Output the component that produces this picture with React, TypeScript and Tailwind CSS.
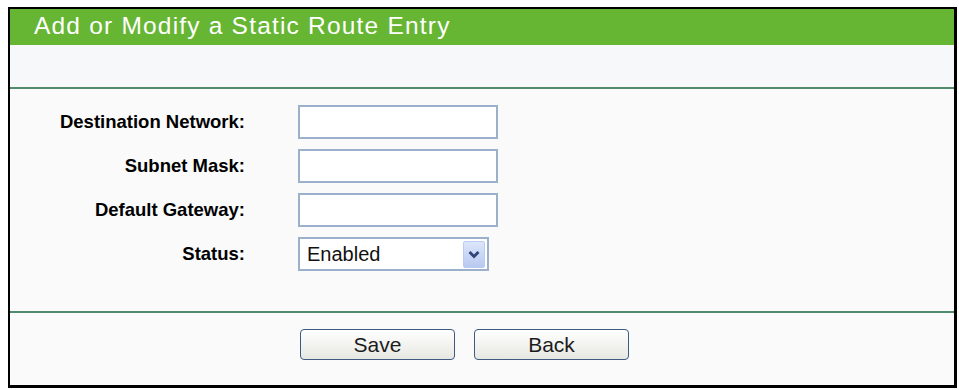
const FIELDS = ['Destination Network:', 'Subnet Mask:', 'Default Gateway:'];

const font = { fontFamily: '"Liberation Sans", Arial, sans-serif' };

const TextBox = () => (
  <div className="h-[34px] w-[200px] border-2 border-[#9bb0cb] bg-white" />
);

const StatusSelect = () => (
  <div className="flex h-[34px] w-[191px] items-center justify-between border-2 border-[#9bb0cb] bg-white pl-[7px] pr-[2px]">
    <span className="text-[20px] text-[#111]">Enabled</span>
    <div className="flex h-[27px] w-[22px] items-center justify-center rounded-[2px] border border-[#bccbf0] bg-gradient-to-b from-[#dce6fb] to-[#b8c9f0]">
      <svg width="12" height="9" viewBox="0 0 12 9">
        <path d="M1.5 2 L6 6.5 L10.5 2" fill="none" stroke="#2f4378" strokeWidth="2.8" />
      </svg>
    </div>
  </div>
);

const FormButton = ({ label }: { label: string }) => (
  <button className="h-[31px] w-[155px] rounded-[4px] border border-[#3e5a80] bg-gradient-to-b from-white to-[#e7e7e2] text-[21px] leading-none text-[#1c1c1c]">
    {label}
  </button>
);

export default function App() {
  return (
    <div className="h-[390px] w-[959px] bg-white pl-[8px] pt-[7px]" style={font}>
      <div className="flex h-[381px] w-[949px] flex-col border-b-[3px] border-l-2 border-r-[3px] border-t-2 border-black bg-[#fafafa]">
        <div className="flex h-[36px] items-center bg-[#66b634] pb-[2px] pl-[24px]">
          <h1 className="text-[24.5px] tracking-[1.2px] text-white">Add or Modify a Static Route Entry</h1>
        </div>
        <div className="h-[42px] bg-[#f7f8fa]" />
        <div className="h-[2px] bg-[#528a6b]" />

        <div className="grid h-[222px] grid-cols-[235px_1fr] content-start gap-x-[53px] gap-y-[10px] pt-[16px]">
          {FIELDS.map((f) => (
            <div key={f} className="contents">
              <label className="flex items-center justify-end text-[18.5px] font-bold text-black">{f}</label>
              <TextBox />
            </div>
          ))}
          <label className="flex items-center justify-end text-[18.5px] font-bold text-black">Status:</label>
          <StatusSelect />
        </div>

        <div className="h-[2px] bg-[#528a6b]" />
        <div className="flex gap-[19px] pl-[290px] pt-[16px]">
          <FormButton label="Save" />
          <FormButton label="Back" />
        </div>
      </div>
    </div>
  );
}
